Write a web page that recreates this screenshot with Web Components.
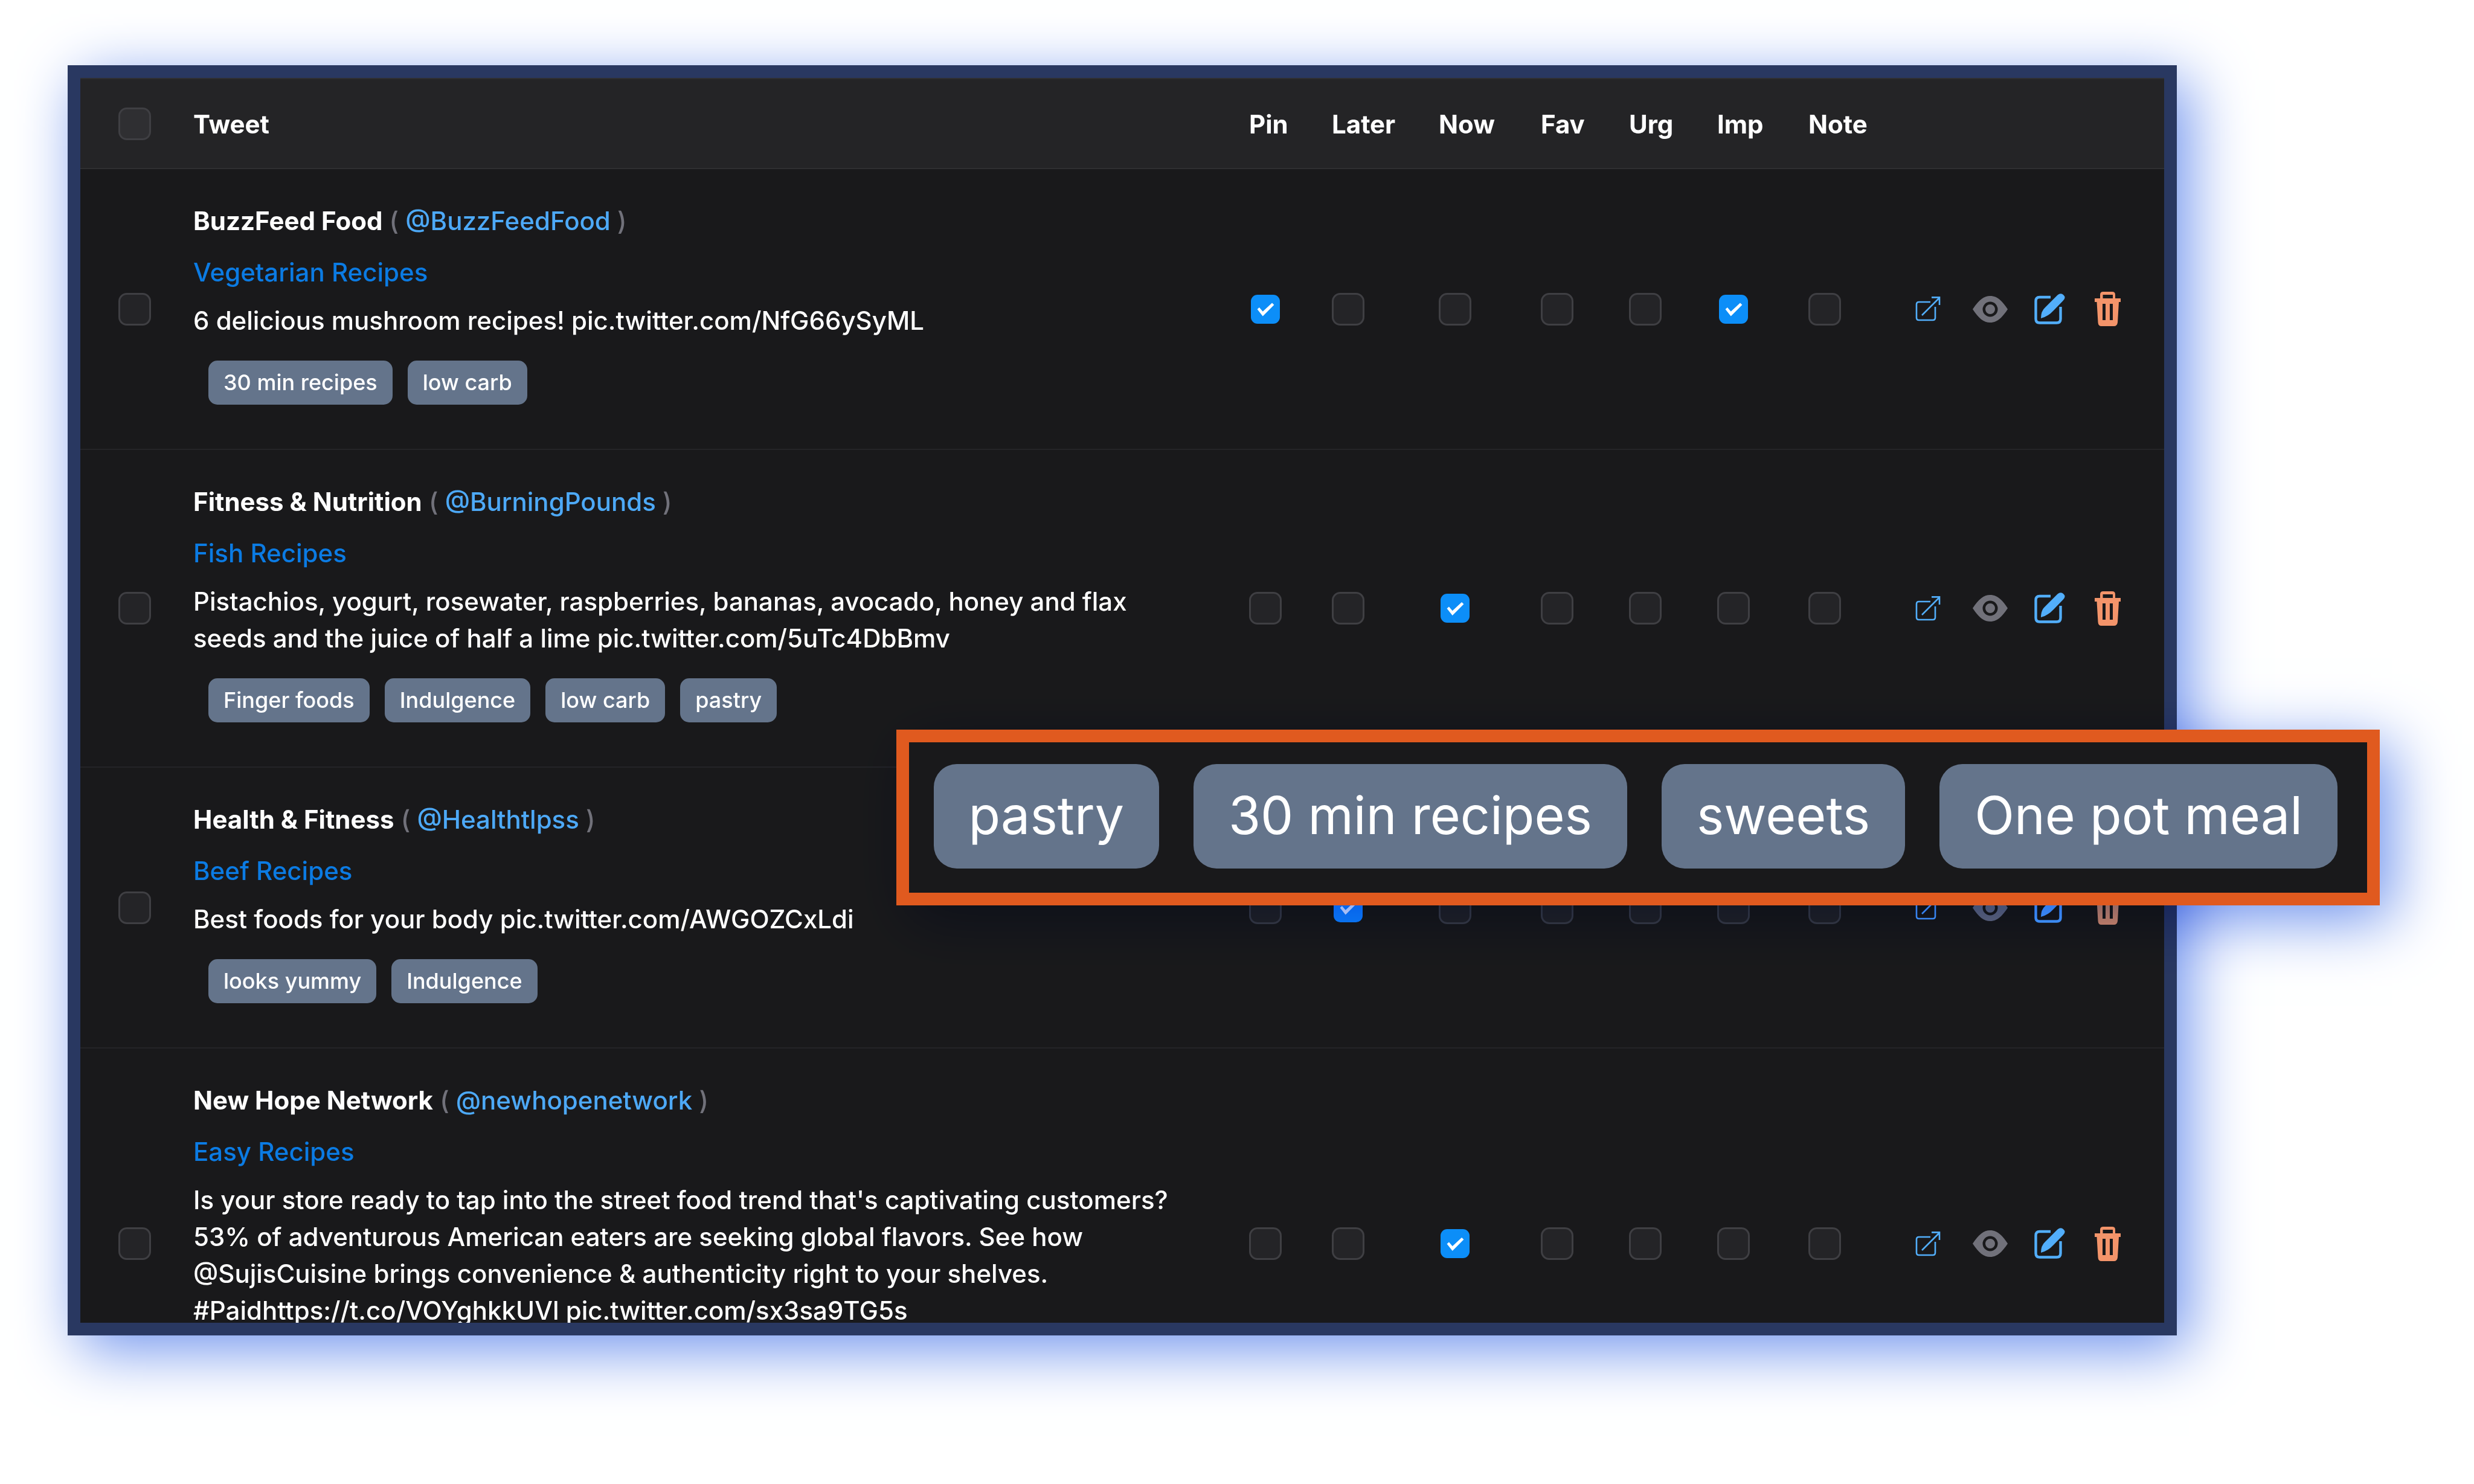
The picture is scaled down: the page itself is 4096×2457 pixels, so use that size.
<!DOCTYPE html>
<html lang="en">
<head>
<meta charset="utf-8">
<title>Tweets</title>
<style>
  html, body { margin: 0; background: #fff; }
  body { font-family: Inter, "Liberation Sans", sans-serif; font-weight: 500; color: #fff; }
</style>
</head>
<body>
<feature-stage>
  <glow-frame>
    <tweet-table></tweet-table>
  </glow-frame>
  <glow-frame slot="callout" tone="orange">
    <tag-list size="large" tags="pastry|30 min recipes|sweets|One pot meal"></tag-list>
  </glow-frame>
</feature-stage>

<script>
const define = (name, html, setup) => {
  const template = document.createElement('template');
  template.innerHTML = html;
  customElements.define(name, class extends HTMLElement {
    constructor() {
      super();
      this.attachShadow({ mode: 'open' }).append(template.content.cloneNode(true));
    }
    connectedCallback() {
      if (setup && !this.ready) { this.ready = true; setup(this, this.shadowRoot); }
    }
  });
};

/* Page stage: main frame in flow, callout floating over it */
define('feature-stage', `
  <style>
    :host { display: block; }
    main {
      position: relative; box-sizing: border-box; height: 100vh; overflow: hidden;
      display: flex; padding: 108px 492px 246px 112px; background: #fff;
    }
    ::slotted(:not([slot])) { flex: 1; min-width: 0; }
    .callout { position: absolute; top: 1208px; right: 156px; }
  </style>
  <main><slot></slot><div class="callout"><slot name="callout"></slot></div></main>`);

/* Bordered frame with a blue drop shadow that darkens whatever is beneath it */
define('glow-frame', `
  <style>
    :host { display: grid; --edge: #293861; }
    :host([tone="orange"]) { --edge: #e05a1f; }
    .shadow, .frame { grid-area: 1 / 1; min-width: 0; min-height: 0; }
    .shadow { box-shadow: 20px 24px 96px rgb(111 147 237); mix-blend-mode: multiply; }
    .frame { position: relative; overflow: hidden; border: 21px solid var(--edge); background: #19191b; }
  </style>
  <div class="shadow"></div><div class="frame"><slot></slot></div>`);

define('tag-list', `
  <style>
    :host { display: block; }
    ul { display: flex; flex-wrap: wrap; gap: 25px; margin: 0; padding: 0 25px; list-style: none; }
    li { padding: 10px 25px; border-radius: 15px; background: #64748b; color: #fff; font-size: 36px; line-height: 53px; }
    :host([size="large"]) ul { flex-wrap: nowrap; gap: 57px; padding: 36px 49px 40px 41px; }
    :host([size="large"]) li { padding: 23px 58px 25px; border-radius: 38px; font-size: 86px; font-weight: 400; line-height: 125px; white-space: nowrap; }
  </style>
  <ul></ul>`, (host, root) => {
  root.querySelector('ul').innerHTML = host.getAttribute('tags').split('|').map(t => `<li>${t}</li>`).join('');
});

define('check-box', `
  <style>
    :host { display: block; }
    input {
      appearance: none; display: grid; place-items: center; box-sizing: border-box; width: 54px; height: 54px; margin: 0;
      border: 3px solid #3f3f43; border-radius: 14px; background: var(--box-fill, #242427);
    }
    input:checked { border-color: transparent; background: #0c8ef8 padding-box; }
    input:checked::before {
      content: ""; width: 48px; height: 48px; background: #fff;
      clip-path: polygon(22% 51%, 29% 45%, 41% 59%, 73% 29%, 80% 36%, 41% 75%);
    }
  </style>
  <input type="checkbox">`, (host, root) => {
  const input = root.querySelector('input');
  input.setAttribute('aria-label', host.getAttribute('label'));
  input.checked = host.hasAttribute('on');
});

const icons = {
  open: ['#52aefb', 41, 41, '<g fill="none" stroke="currentColor" stroke-width="2.6"><path d="M25 9H6Q2 9 2 13V35Q2 39 6 39H29Q33 39 33 35V17"/><path d="M11 31L40 2M27 1.4H40V14"/></g>'],
  view: ['#71717a', 58, 44, '<path fill="currentColor" fill-rule="evenodd" d="M0 22C10 7 18 0 29 0S48 7 58 22C48 37 40 44 29 44S10 37 0 22ZM29 9.5A12.5 12.5 0 1 0 29 34.5A12.5 12.5 0 1 0 29 9.5ZM29 14A8 8 0 1 1 29 30A8 8 0 1 1 29 14Z"/>'],
  edit: ['#52aefb', 52, 52, '<path fill="none" stroke="currentColor" stroke-width="4.4" d="M28 6H10Q3.500 6 3.500 12.500V42Q3.500 48.500 10 48.500H38Q44.500 48.500 44.500 42V22"/><path fill="currentColor" d="M39.500 2.500Q45-2 49.500 2.500Q54 7 48.500 12L33 28Q24 38 12 41Q12 29 19 23Z"/>'],
  remove: ['#f3946a', 43, 57, '<path fill="currentColor" fill-rule="evenodd" d="M0 11H9V5Q9 0 14 0H29Q34 0 34 5V11H43V17H40L38 51Q37 57 32 57H11Q6 57 5.500 51L3.500 17H0ZM13.500 11H30V5H13.500ZM13 20V47H18V20ZM25 20V47H30V20Z"/>'],
};
define('row-action', `
  <style>
    :host { display: block; }
    a, button { display: block; width: max-content; margin: 0; padding: 0; border: 0; background: none; color: inherit; }
    svg { display: block; }
  </style>`, (host, root) => {
  const kind = host.getAttribute('kind');
  const [color, w, h, shapes] = icons[kind];
  const tag = kind === 'open' ? 'a' : 'button';
  const control = document.createElement(tag);
  if (tag === 'a') control.href = '#'; else control.type = 'button';
  control.setAttribute('aria-label', kind);
  control.style.color = color;
  control.innerHTML = `<svg width="${w}" height="${h}" viewBox="0 0 ${w} ${h}" overflow="visible" aria-hidden="true">${shapes}</svg>`;
  root.append(control);
});

define('tweet-entry', `
  <style>
    :host { display: block; font-size: 42px; line-height: 61px; }
    a { text-decoration: none; }
    p { margin: 0; }
    .author { margin-bottom: 24px; color: #71717a; }
    strong { color: #fff; font-weight: 700; }
    .handle { color: #4da9f7; }
    .topic { margin-bottom: 19px; }
    .topic a { color: #0b7be3; }
    .body { margin-bottom: 36px; color: #fff; }
  </style>
  <p class="author"><strong><slot name="name"></slot></strong> ( <a class="handle" href="#"><slot name="handle"></slot></a> )</p>
  <p class="topic"><a href="#"><slot name="topic"></slot></a></p>
  <p class="body"><slot></slot></p>
  <slot name="tags"></slot>`);

const flags = ['Pin', 'Later', 'Now', 'Fav', 'Urg', 'Imp', 'Note'];
const tweets = [
  { name: 'BuzzFeed Food', handle: '@BuzzFeedFood', topic: 'Vegetarian Recipes',
    body: '6 delicious mushroom recipes! pic.twitter.com/NfG66ySyML', tags: '30 min recipes|low carb', on: ['Pin', 'Imp'] },
  { name: 'Fitness &amp; Nutrition', handle: '@BurningPounds', topic: 'Fish Recipes',
    body: 'Pistachios, yogurt, rosewater, raspberries, bananas, avocado, honey and flax seeds and the juice of half a lime pic.twitter.com/5uTc4DbBmv',
    tags: 'Finger foods|Indulgence|low carb|pastry', on: ['Now'] },
  { name: 'Health &amp; Fitness', handle: '@Healthtlpss', topic: 'Beef Recipes',
    body: 'Best foods for your body pic.twitter.com/AWGOZCxLdi', tags: 'looks yummy|Indulgence', on: ['Later'] },
  { name: 'New Hope Network', handle: '@newhopenetwork', topic: 'Easy Recipes',
    body: "Is your store ready to tap into the street food trend that's captivating customers? 53% of adventurous American eaters are seeking global flavors. See how @SujisCuisine brings convenience &amp; authenticity right to your shelves. #Paidhttps://t.co/VOYghkkUVl pic.twitter.com/sx3sa9TG5s",
    tags: 'street food', on: ['Now'] },
];
define('tweet-table', `
  <style>
    :host { display: block; height: 0; }
    table { width: 100%; table-layout: fixed; border-collapse: separate; border-spacing: 0; }
    .c-select { width: 155px; } .c-pin { width: 137px; } .c-later { width: 177px; } .c-now { width: 169px; }
    .c-fav, .c-urg { width: 146px; } .c-imp { width: 151px; } .c-note { width: 177px; }
    .c-open { width: 95px; } .c-view, .c-edit { width: 101px; } .c-trash { width: 147px; }
    th, td { padding: 55px 0 75px 32px; border-bottom: 2px solid #242427; vertical-align: middle; text-align: left; }
    td:not(.tweet) { padding-top: 0; padding-bottom: 0; }
    td.tweet { padding-right: 60px; padding-bottom: 73px; }
    th { padding-top: 44px; padding-bottom: 42px; background: #242426; --box-fill: #2f2f32;
      border-top: 2px solid #2f2f31; border-bottom-color: #2f2f31; font-size: 42px; line-height: 61px; font-weight: 700; }
    th:first-child { padding-top: 0; padding-bottom: 0; }
    th:first-child, td:first-child { padding-left: 63px; }
  </style>
  <table>
    <colgroup><col class="c-select"><col><col class="c-pin"><col class="c-later"><col class="c-now"><col class="c-fav"><col class="c-urg"><col class="c-imp"><col class="c-note"><col class="c-open"><col class="c-view"><col class="c-edit"><col class="c-trash"></colgroup>
    <thead><tr></tr></thead>
    <tbody></tbody>
  </table>`, (host, root) => {
  root.querySelector('thead tr').innerHTML =
    '<th><check-box label="Select all"></check-box></th><th>Tweet</th>' +
    flags.map(f => `<th>${f}</th>`).join('') + '<th></th>'.repeat(4);
  root.querySelector('tbody').innerHTML = tweets.map(t => `<tr>
    <td><check-box label="Select tweet"></check-box></td>
    <td class="tweet"><tweet-entry><span slot="name">${t.name}</span><span slot="handle">${t.handle}</span><span slot="topic">${t.topic}</span>${t.body}<tag-list slot="tags" tags="${t.tags}"></tag-list></tweet-entry></td>
    ${flags.map(f => `<td><check-box label="${f}"${t.on.includes(f) ? ' on' : ''}></check-box></td>`).join('')}
    ${Object.keys(icons).map(k => `<td><row-action kind="${k}"></row-action></td>`).join('')}
  </tr>`).join('');
});
</script>
</body>
</html>
